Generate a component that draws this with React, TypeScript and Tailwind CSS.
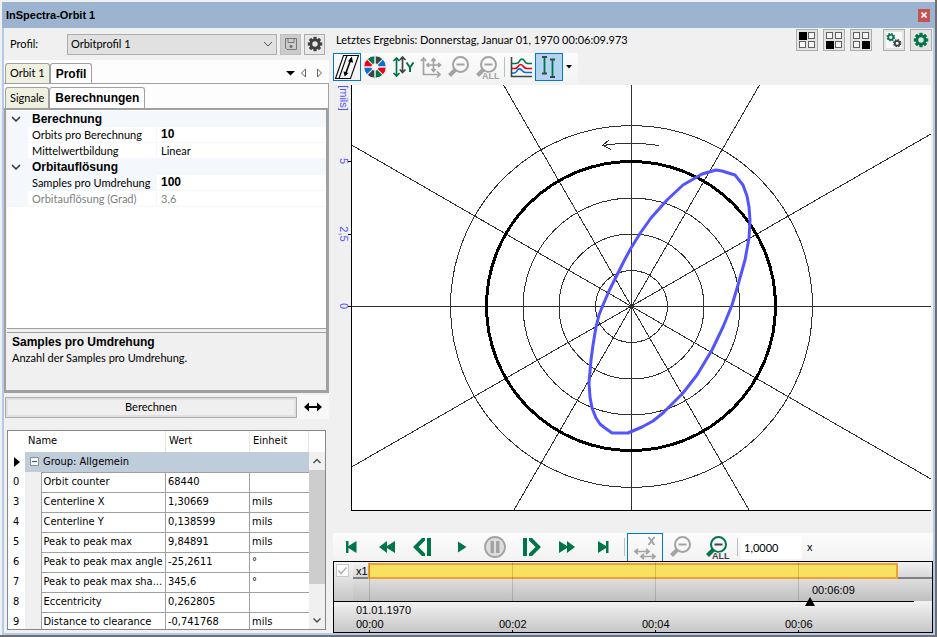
import { useState } from "react";
import type { ReactNode } from "react";
import clsx from "clsx";

const GREEN = "#00754a";
const GREY = "#a3a3a3";
const DARK = "#3c4448";

type PropertyGroup = {
  title: string;
  items: { label: string; value: string; bold?: boolean; muted?: boolean; active?: boolean }[];
};

const propertyGroups: PropertyGroup[] = [
  {
    title: "Berechnung",
    items: [
      { label: "Orbits pro Berechnung", value: "10", bold: true },
      { label: "Mittelwertbildung", value: "Linear" },
    ],
  },
  {
    title: "Orbitauflösung",
    items: [
      { label: "Samples pro Umdrehung", value: "100", bold: true, active: true },
      { label: "Orbitauflösung (Grad)", value: "3,6", muted: true },
    ],
  },
];

const resultRows = [
  { id: "0", name: "Orbit counter", value: "68440", unit: "" },
  { id: "3", name: "Centerline X", value: "1,30669", unit: "mils" },
  { id: "4", name: "Centerline Y", value: "0,138599", unit: "mils" },
  { id: "5", name: "Peak to peak max", value: "9,84891", unit: "mils" },
  { id: "6", name: "Peak to peak max angle", value: "-25,2611", unit: "°" },
  { id: "7", name: "Peak to peak max sha...", value: "345,6", unit: "°" },
  { id: "8", name: "Eccentricity", value: "0,262805", unit: "" },
  { id: "9", name: "Distance to clearance", value: "-0,741768", unit: "mils" },
];

const orbitPoints =
  "631,248 624,261 616,277 609,291 603,305 599,315 596,327 593,345 591,360 589,383 590,397 592,408 596,418 600,424 605,428 612,433 628,433 642,427 653,421 663,413 683,393 697,375 712,350 723,327 732,305 738,285 745,260 749,238 750,220 749,207 747,196 743,185 735,175 722,171 716,170 702,174 683,185 667,200 651,218 641,232";

function polar(cx: number, cy: number, r: number, deg: number) {
  const a = (deg * Math.PI) / 180;
  return `${(cx + r * Math.sin(a)).toFixed(2)} ${(cy - r * Math.cos(a)).toFixed(2)}`;
}

/* ---------- icons ---------- */

function SkewIcon() {
  return (
    <svg viewBox="0 0 28 28" className="size-7" fill="none" stroke="#000">
      <path d="M2.5 25.5 L10.5 2.5 H25.5 L17.5 25.5 Z M6 25.5 L14 2.5" strokeWidth="1.1" />
      <path d="M12.5 21 L18 6" strokeWidth="1.6" />
      <path d="M18.8 3.6 L15 8.2 L20 9.8 Z M11.7 23.4 L10.5 18.6 L15.4 20 Z" fill="#000" stroke="none" />
    </svg>
  );
}

function WheelIcon() {
  const colors = [DARK, "#0b6fd0", "#f00018", GREEN, DARK, "#0b6fd0", "#f00018", GREEN];
  return (
    <svg viewBox="0 0 28 28" className="size-7">
      {colors.map((color, i) => (
        <path
          key={i}
          fill={color}
          d={`M${polar(14, 14, 3.4, i * 45 + 4)} L${polar(14, 14, 11.2, i * 45 + 1)} A11.2 11.2 0 0 1 ${polar(14, 14, 11.2, i * 45 + 44)} L${polar(14, 14, 3.4, i * 45 + 41)} Z`}
          stroke="#fafafa"
          strokeWidth="0.8"
        />
      ))}
    </svg>
  );
}

function ScaleYIcon() {
  return (
    <svg viewBox="0 0 28 28" className="size-7" fill="none" strokeWidth="1.7">
      <path d="M7.5 5 V23 M4.5 8 L7.5 5 L10.5 8 M4.5 20 L7.5 23 L10.5 20" stroke={GREEN} />
      <path d="M13.5 4 V19 M10.8 7 L13.5 4 L16.5 7 M10.8 16.5 L13.5 19.5 L16.5 16.5" stroke={DARK} />
      <path d="M17.5 9.5 L21 14.5 L24.5 9.5 M21 14 V19" stroke={GREEN} strokeWidth="2" />
    </svg>
  );
}

function PanIcon() {
  return (
    <svg viewBox="0 0 28 28" className="size-7" fill="none" stroke={GREY} strokeWidth="1.7">
      <path d="M6.5 5 V21.5 H23 M4 8 L6.5 5 L9 8 M20 18.5 L23 21.5 L20 24.5" />
      <path d="M16.5 6 V18 M10 12 H23 M14.5 8 L16.5 5.5 L18.5 8 M14.5 16 L16.5 18.5 L18.5 16 M12 10 L10 12 L12 14 M21 10 L23.5 12 L21 14" />
    </svg>
  );
}

function ZoomOutIcon({ all = false, color = GREY }: { all?: boolean; color?: string }) {
  return (
    <svg viewBox="0 0 28 28" className="size-7" fill="none">
      <path d="M10 17 L4.5 22.5" stroke={color} strokeWidth="4" />
      <circle cx="15.5" cy="11.5" r="7.5" stroke={color} strokeWidth="2" />
      <path d="M11.5 11.5 H19.5" stroke={all && color !== GREY ? DARK : color} strokeWidth="2" />
      {all && (
        <text
          x="9"
          y="26"
          fontSize="9"
          fontWeight="700"
          fontFamily="Liberation Sans, sans-serif"
          fill={color === GREY ? GREY : DARK}
          stroke="#f4f4f4"
          strokeWidth="1"
          paintOrder="stroke"
        >
          ALL
        </text>
      )}
    </svg>
  );
}

function CurvesIcon() {
  return (
    <svg viewBox="0 0 28 28" className="size-7" fill="none" strokeWidth="1.6">
      <path d="M4.5 4 V23.5 H25" stroke={DARK} />
      <path d="M5 10.5 H9 Q11.5 10.5 12.5 8 Q15 4 17.5 8 Q18.5 10.5 21 10.5 H25" stroke={GREEN} />
      <path d="M5 15.5 H8 Q10 15.5 11.5 13 Q13.5 10 16 13 Q17.5 15.5 20 15.5 H25" stroke="#f00018" />
      <path d="M5 20 H7 Q9 20 10.5 17 Q12.5 14.5 15 17.5 Q16.5 19.5 19 19.5 H25" stroke="#0b6fd0" />
    </svg>
  );
}

function CursorsIcon() {
  return (
    <svg viewBox="0 0 28 28" className="size-7" fill="none" strokeWidth="1.8">
      <path d="M9.5 4 V20 M17.5 7 V24" stroke={GREEN} />
      <path d="M7 4 H12 M7 20.5 H12 M15 6.5 H20 M15 24 H20" stroke={DARK} />
    </svg>
  );
}

function GearIcon({ color, className }: { color: string; className: string }) {
  return (
    <svg viewBox="0 0 20 20" className={className}>
      <circle cx="10" cy="10" r="5.2" fill="none" stroke={color} strokeWidth="3.6" />
      {[0, 45, 90, 135, 180, 225, 270, 315].map((deg) => (
        <rect key={deg} x="8" y="1" width="4" height="4" fill={color} transform={`rotate(${deg} 10 10)`} />
      ))}
    </svg>
  );
}

function TwoGearsIcon() {
  return (
    <svg viewBox="0 0 20 20" className="size-4 bg-[#fafafa]" fill="none">
      <circle cx="6" cy="6.5" r="3.2" stroke={GREEN} strokeWidth="2.2" />
      <circle cx="6" cy="6.5" r="4.6" stroke={GREEN} strokeWidth="1.6" strokeDasharray="2 1.6" />
      <circle cx="14" cy="14" r="3" stroke={DARK} strokeWidth="2.2" />
      <circle cx="14" cy="14" r="4.4" stroke={DARK} strokeWidth="1.6" strokeDasharray="2 1.45" />
    </svg>
  );
}

function QuadIcon({ filled }: { filled: number }) {
  const cells = [
    [1, 1],
    [10, 1],
    [1, 10],
    [10, 10],
  ];
  return (
    <svg viewBox="0 0 18 18" className="size-[18px]" shapeRendering="crispEdges">
      {cells.map(([x, y], i) =>
        i === filled ? (
          <rect key={i} x={x} y={y} width="8" height="8" fill="#000" />
        ) : (
          <rect key={i} x={x + 0.5} y={y + 0.5} width="6" height="6" fill="#f6f6f6" stroke="#606060" />
        ),
      )}
    </svg>
  );
}

function SaveIcon() {
  return (
    <svg viewBox="0 0 16 16" className="size-4" fill="none" stroke="#777">
      <path d="M2.5 2.5 H13.5 V13.5 H4 L2.5 12 Z M5 2.5 V6.5 H11 V2.5" />
      <circle cx="8" cy="10.5" r="1.2" fill="#777" />
    </svg>
  );
}

function PlayerIcon({ children }: { children: ReactNode }) {
  return (
    <svg viewBox="0 0 24 24" className="size-6" fill={GREEN}>
      {children}
    </svg>
  );
}

/* ---------- left side ---------- */

function Tab({ label, active, onClick }: { label: string; active: boolean; onClick: () => void }) {
  return (
    <button
      type="button"
      role="tab"
      aria-selected={active}
      onClick={onClick}
      className={clsx(
        "h-full whitespace-nowrap rounded-t-[3px] border border-b-0 border-[#a0a0a0]",
        active ? "bg-white px-[5px] font-['Liberation_Sans'] text-[12px] font-bold" : "bg-[#f0f0e0] px-1",
      )}
    >
      {label}
    </button>
  );
}

function PropertyGrid() {
  return (
    <div className="min-h-0 flex-1 border-b border-[#a0a0a0] bg-white pt-px">
      <table className="w-full table-fixed border-separate border-spacing-0">
        <colgroup>
          <col className="w-[21px]" />
          <col className="w-[129px]" />
          <col />
        </colgroup>
        {propertyGroups.map((group) => (
          <tbody key={group.title}>
            <tr className="h-4 bg-[#f4f7fc]">
              <td className="p-0 pl-1">
                <svg viewBox="0 0 10 10" className="size-[10px]" fill="none" stroke="#333" strokeWidth="1.5">
                  <path d="M1 3 L5 7 L9 3" />
                </svg>
              </td>
              <th colSpan={2} className="p-0 pl-1 text-left font-['Liberation_Sans'] text-[12px] leading-4 font-bold">
                {group.title}
              </th>
            </tr>
            {group.items.map((item) => (
              <tr key={item.label} className={clsx("h-4", item.muted && "text-[#808080]")}>
                <td className="bg-[#f4f7fc] p-0" />
                <td
                  className={clsx(
                    "border-r border-b border-[#f4f7fc] p-0 pl-1 leading-[15px] whitespace-nowrap",
                    item.active && "bg-[#f4f7fc]",
                  )}
                >
                  {item.label}
                </td>
                <td
                  className={clsx(
                    "border-b border-[#f4f7fc] p-0 pl-1 leading-[15px]",
                    item.bold && "font-['Liberation_Sans'] text-[12px] font-bold",
                  )}
                >
                  {item.value}
                </td>
              </tr>
            ))}
          </tbody>
        ))}
      </table>
    </div>
  );
}

function ResultTable() {
  return (
    <div className="mr-[3px] ml-[3px] flex h-[200px] overflow-hidden border border-[#828790] bg-white font-['DejaVu_Sans_Condensed','DejaVu_Sans',sans-serif] text-[11px] [font-stretch:condensed]">
      <table className="h-max flex-1 table-fixed border-collapse">
        <colgroup>
          <col className="w-[17px]" />
          <col className="w-4" />
          <col />
          <col className="w-[84px]" />
          <col className="w-[59px]" />
        </colgroup>
        <thead>
          <tr className="h-[21px] text-left">
            <th className="p-0" />
            <th colSpan={2} className="border-r border-[#e5e5e5] p-0 pl-[3px] font-normal">Name</th>
            <th className="border-r border-[#e5e5e5] p-0 pl-[3px] font-normal">Wert</th>
            <th className="border-r border-[#e5e5e5] p-0 pl-[3px] font-normal">Einheit</th>
          </tr>
        </thead>
        <tbody>
          <tr className="h-5">
            <td className="p-0 pl-1.5">
              <svg viewBox="0 0 6 10" className="h-[10px] w-[6px]">
                <path d="M0 0 L6 5 L0 10 Z" />
              </svg>
            </td>
            <td colSpan={4} className="bg-[#bfccd9] p-0">
              <span className="flex items-center gap-1 pl-[5px]">
                <svg viewBox="0 0 9 9" className="size-[9px]" fill="#f4f4f4" stroke="#8a8f96">
                  <path d="M0.5 0.5 H8.5 V8.5 H0.5 Z" />
                  <path d="M2 4.5 H7" stroke="#2050b0" />
                </svg>
                Group: Allgemein
              </span>
            </td>
          </tr>
          {resultRows.map((row) => (
            <tr key={row.id} className="h-5">
              <td className="p-0 pl-[5px]">{row.id}</td>
              <td className="bg-[#f0f0f0] p-0" />
              <td className="overflow-hidden border border-[#a0a0a0] p-0 pl-0.5 whitespace-nowrap">{row.name}</td>
              <td className="border border-[#a0a0a0] p-0 pl-0.5">{row.value}</td>
              <td className="border-y border-[#a0a0a0] p-0 pl-0.5">{row.unit}</td>
            </tr>
          ))}
        </tbody>
      </table>
      <div className="flex w-4 flex-col">
        <div className="h-[21px] shrink-0" />
        <div className="flex min-h-0 flex-1 flex-col items-center bg-[#f0f0f0]">
          <svg viewBox="0 0 16 18" className="h-[18px] w-4 shrink-0" fill="none" stroke="#505050" strokeWidth="1.5">
            <path d="M4.5 11 L8 7.5 L11.5 11" />
          </svg>
          <div className="h-[114px] w-full bg-[#cdcdcd]" />
          <div className="flex-1" />
          <svg viewBox="0 0 16 18" className="h-[18px] w-4 shrink-0" fill="none" stroke="#505050" strokeWidth="1.5">
            <path d="M4.5 7.5 L8 11 L11.5 7.5" />
          </svg>
        </div>
      </div>
    </div>
  );
}

function SidePanel() {
  const [outerTab, setOuterTab] = useState("Profil");
  const [innerTab, setInnerTab] = useState("Berechnungen");

  return (
    <aside className="flex w-[325px] shrink-0 flex-col">
      <div className="flex h-8 items-center pl-1.5">
        <label htmlFor="profile" className="w-[57px]">Profil:</label>
        <div className="grid h-[21px] flex-1 grid-cols-1 items-center">
          <select
            id="profile"
            className="col-start-1 row-start-1 h-[21px] w-full appearance-none border border-[#adadad] bg-[#e1e1e1] px-[3px]"
          >
            <option>Orbitprofil 1</option>
          </select>
          <svg
            viewBox="0 0 10 10"
            className="pointer-events-none col-start-1 row-start-1 mr-1 size-[10px] justify-self-end"
            fill="none"
            stroke="#505050"
          >
            <path d="M1 3 L5 7 L9 3" />
          </svg>
        </div>
        <button
          type="button"
          aria-label="Speichern"
          disabled
          className="ml-[3px] flex size-[21px] items-center justify-center border border-[#bfbfbf] bg-[#cccccc]"
        >
          <SaveIcon />
        </button>
        <button
          type="button"
          aria-label="Einstellungen"
          className="mr-1 ml-[3px] flex size-[21px] items-center justify-center border border-[#adadad] bg-[#e8e8e8]"
        >
          <GearIcon color="#404040" className="size-4" />
        </button>
      </div>

      <div role="tablist" className="flex h-6 border-b border-[#a0a0a0] bg-[#fdfdfd] pt-[3px] pl-px">
        <Tab label="Orbit 1" active={outerTab === "Orbit 1"} onClick={() => setOuterTab("Orbit 1")} />
        <Tab label="Profil" active={outerTab === "Profil"} onClick={() => setOuterTab("Profil")} />
        <svg viewBox="0 0 40 12" className="mt-1 mr-1 ml-auto h-3 w-10">
          <path d="M1 4 H10 L5.5 8.5 Z" />
          <path d="M20.5 2 V10 L16.5 6 Z M32.5 2 V10 L36.5 6 Z" fill="none" stroke="#606060" />
        </svg>
      </div>
      <div role="tablist" className="flex h-6 border-r border-[#a0a0a0] bg-[#fdfdfd] pt-[3px] pl-px">
        <Tab label="Signale" active={innerTab === "Signale"} onClick={() => setInnerTab("Signale")} />
        <Tab label="Berechnungen" active={innerTab === "Berechnungen"} onClick={() => setInnerTab("Berechnungen")} />
      </div>

      <div className="flex min-h-0 flex-1 flex-col border-2 border-r-[3px] border-b-[3px] border-[#a0a0a0] pl-px">
        <PropertyGrid />
        <div className="mt-[3px] h-[58px] border-t border-[#a0a0a0] px-[5px] pt-0.5 leading-[15px]">
          <p className="font-['Liberation_Sans'] text-[12px] font-bold">Samples pro Umdrehung</p>
          <p>Anzahl der Samples pro Umdrehung.</p>
        </div>
      </div>

      <div className="flex h-[37px] pt-1 pl-px">
        <button
          type="button"
          className="h-[21px] flex-1 border border-[#adadad] bg-[#efefef] ring-2 ring-[#e1e1e1] ring-inset"
        >
          Berechnen
        </button>
        <button
          type="button"
          aria-label="Breite anpassen"
          className="-mt-0.5 flex h-6 w-8 items-center justify-center bg-[#f8f8f8]"
        >
          <svg viewBox="0 0 20 10" className="h-[10px] w-5">
            <path d="M1 5 L6 0.5 V4 H14 V0.5 L19 5 L14 9.5 V6 H6 V9.5 Z" />
          </svg>
        </button>
      </div>

      <ResultTable />
      <div className="h-[3px]" />
    </aside>
  );
}

/* ---------- right side ---------- */

function OrbitChart() {
  return (
    <svg viewBox="333 85 598 426" preserveAspectRatio="xMinYMin meet" className="min-h-0 w-full flex-1">
      <rect x="352" y="85" width="579" height="425" fill="#fff" />
      <g shapeRendering="crispEdges" fill="none" stroke="#303030">
        <circle cx="631.5" cy="306.5" r="36" />
        <circle cx="631.5" cy="306.5" r="72.5" />
        <circle cx="631.5" cy="306.5" r="108.5" />
        <circle cx="631.5" cy="306.5" r="181" />
        <path d="M351 306.5 H931 M631.5 85 V510" />
        <path d="M351.5 145 L931 479 M351.5 467 L931 134 M503.5 85 L749 510 M514 510 L759.5 85" />
        <path d="M602.5 145.5 Q630 141 659 145.5 M609 140 L602.5 145.5 L611.5 149.5" />
      </g>
      <circle cx="631.5" cy="306.5" r="2" fill="#303030" />
      <circle cx="631" cy="306" r="144.5" fill="none" stroke="#000" strokeWidth="3" shapeRendering="crispEdges" />
      <polygon points={orbitPoints} fill="none" stroke="#5454ff" strokeWidth="3" strokeLinejoin="round" />
      <path
        d="M351.5 85 V510.5 H931 M348 161.5 H351 M348 234.5 H351 M348 306.5 H351"
        fill="none"
        stroke="#000"
        shapeRendering="crispEdges"
      />
      <g fill="#5454ff" fontSize="11" textAnchor="middle" fontFamily="Liberation Sans, sans-serif">
        <text transform="translate(340 98) rotate(90)">[mils]</text>
        <text transform="translate(340 161) rotate(90)">5</text>
        <text transform="translate(340 234) rotate(90)">2,5</text>
        <text transform="translate(340 306) rotate(90)">0</text>
      </g>
    </svg>
  );
}

function ToolButton({
  label,
  selected,
  outlined,
  disabled,
  children,
}: {
  label: string;
  selected?: boolean;
  outlined?: boolean;
  disabled?: boolean;
  children: ReactNode;
}) {
  return (
    <button
      type="button"
      aria-label={label}
      disabled={disabled}
      className={clsx(
        "flex size-7 shrink-0 items-center justify-center",
        selected && "bg-[#b3d4f1]",
        (selected || outlined) && "outline outline-1 -outline-offset-1 outline-[#0078d7]",
      )}
    >
      {children}
    </button>
  );
}

function ChartToolbar() {
  return (
    <div className="flex h-8 w-[245px] items-start bg-linear-to-b from-[#fcfcfc] to-[#f2f2f2]">
      <ToolButton label="Orbit" outlined><SkewIcon /></ToolButton>
      <ToolButton label="Farben"><WheelIcon /></ToolButton>
      <ToolButton label="Y skalieren"><ScaleYIcon /></ToolButton>
      <ToolButton label="Verschieben" disabled><PanIcon /></ToolButton>
      <ToolButton label="Verkleinern" disabled><ZoomOutIcon /></ToolButton>
      <ToolButton label="Alles anzeigen" disabled><ZoomOutIcon all /></ToolButton>
      <div className="mr-0.5 ml-[3px] mt-1 h-5 w-px shrink-0 bg-[#bdbdbd]" />
      <ToolButton label="Kurven"><CurvesIcon /></ToolButton>
      <ToolButton label="Cursor" selected><CursorsIcon /></ToolButton>
      <button type="button" aria-label="Cursor auswählen" className="flex h-7 w-3 items-center justify-center">
        <svg viewBox="0 0 6 4" className="h-1 w-1.5">
          <path d="M0 0 H6 L3 3.5 Z" />
        </svg>
      </button>
    </div>
  );
}

function PlayerToolbar() {
  const buttons: { label: string; icon: ReactNode; disabled?: boolean }[] = [
    { label: "Anfang", icon: <path d="M7 6 H9.500 V11 L17.500 6 V18 L9.500 13 V18 H7 Z" /> },
    { label: "Zurückspulen", icon: <path d="M4 12 L12 6 V11 L20 6 V18 L12 13 V18 Z" /> },
    {
      label: "Schritt zurück",
      icon: <path d="M16 3 H20 V21 H16 Z M11 3 L2 12 L11 21 H14 V18.5 L7.5 12 L14 5.5 V3 Z" />,
    },
    { label: "Wiedergabe", icon: <path d="M11 6.5 V17.5 L19.5 12 Z" /> },
    {
      label: "Pause",
      disabled: true,
      icon: (
        <>
          <circle cx="12" cy="12" r="10" fill="#dedede" stroke={GREY} strokeWidth="1.8" />
          <path d="M7.5 6 H11 V18 H7.5 Z M13 6 H16.5 V18 H13 Z" fill={GREY} />
        </>
      ),
    },
    {
      label: "Schritt vor",
      icon: <path d="M4 3 H8 V21 H4 Z M13 3 L22 12 L13 21 H10 V18.5 L16.5 12 L10 5.5 V3 Z" />,
    },
    { label: "Vorspulen", icon: <path d="M20 12 L12 6 V11 L4 6 V18 L12 13 V18 Z" /> },
    { label: "Ende", icon: <path d="M17.5 6 H15 V11 L7 6 V18 L15 13 V18 H17.5 Z" /> },
  ];

  return (
    <div className="flex h-7 items-center bg-linear-to-b from-[#fcfcfc] to-[#f2f2f2]">
      {buttons.map((button) => (
        <button
          key={button.label}
          type="button"
          aria-label={button.label}
          disabled={button.disabled}
          className="flex h-full w-9 shrink-0 items-center justify-center"
        >
          <PlayerIcon>{button.icon}</PlayerIcon>
        </button>
      ))}
      <div className="mr-0.5 ml-[3px] h-[18px] w-px bg-[#bdbdbd]" />
      <button
        type="button"
        aria-label="X verschieben"
        className="flex h-7 w-9 items-center justify-center border border-b-0 border-[#0078d7]"
      >
        <svg viewBox="0 0 28 26" className="h-[26px] w-7" fill="none" stroke={GREY} strokeWidth="1.7">
          <path d="M17.5 2 L23.5 10 M23.5 2 L17.5 10" strokeWidth="2" />
          <path d="M4 16.5 H18 M7 14 L4 16.5 L7 19 M15 14 L18 16.5 L15 19" />
          <path d="M10 21.5 H24 M13 19 L10 21.5 L13 24 M21 19 L24 21.5 L21 24" />
        </svg>
      </button>
      <button type="button" aria-label="Zeit verkleinern" disabled className="flex w-9 justify-center">
        <ZoomOutIcon />
      </button>
      <button type="button" aria-label="Zeit alles" className="flex w-9 justify-center">
        <ZoomOutIcon all color={GREEN} />
      </button>
      <div className="mr-[3px] ml-0.5 h-[18px] w-px bg-[#bdbdbd]" />
      <input
        aria-label="Geschwindigkeit"
        defaultValue="1,0000"
        className="h-[23px] w-[61px] bg-white px-[3px]"
      />
      <span className="ml-[5px] font-['Liberation_Sans']">x</span>
    </div>
  );
}

function Timeline() {
  const ticks = ["00:00", "00:02", "00:04", "00:06"];
  return (
    <div className="relative border border-black font-['Liberation_Sans'] text-[11px]">
      <div className="flex h-[39px]">
        <div className="w-[19px] bg-linear-to-b from-[#f6f6f6] to-[#c6c6c6] pt-0.5 pl-0.5">
          <div className="grid size-[13px]">
            <input
              type="checkbox"
              aria-label="Spur x1"
              defaultChecked
              className="col-start-1 row-start-1 size-[13px] appearance-none border border-[#c8c8c8] bg-white"
            />
            <svg
              viewBox="0 0 13 13"
              className="pointer-events-none col-start-1 row-start-1 size-[13px]"
              fill="none"
              stroke="#b0b0b0"
              strokeWidth="1.5"
            >
              <path d="M2.5 6.5 L5 9.5 L10.5 3.5" />
            </svg>
          </div>
        </div>
        <div className="flex flex-1 flex-col">
          <div className="flex h-[17px] items-start border-b-2 border-[#808080] bg-linear-to-b from-[#f2f2f2] to-[#d8d8d8]">
            <span className="w-[15px] pl-[3px] leading-[18px]">x1</span>
            <div className="mt-px mr-[34px] h-4 flex-1 border-2 border-[#f0a030] bg-[#f8e060]" />
          </div>
          <div className="flex-1 bg-linear-to-b from-[#dedede] to-[#bfbfbf]" />
        </div>
      </div>
      <div className="h-px bg-linear-to-r from-black from-97% to-transparent to-97%" />
      <div className="h-[30px] bg-linear-to-b from-[#f2f2f2] to-[#c6c6c6] pt-px">
        <p className="pl-[22px] leading-[14px]">01.01.1970</p>
        <div className="flex pl-[22px] leading-[14px]">
          {ticks.map((tick) => (
            <span key={tick} className="w-[143px] shrink-0 last:w-auto">{tick}</span>
          ))}
        </div>
      </div>
      <div className="pointer-events-none absolute inset-x-0 top-0 flex h-[39px] overflow-hidden pl-[35px]">
        {ticks.map((tick) => (
          <i key={tick} className="w-[143px] shrink-0 border-l border-black/15" />
        ))}
      </div>
      {/* short marks where the scale meets the upper and lower frame */}
      <div className="pointer-events-none absolute inset-x-0 bottom-0 flex h-0.5 overflow-hidden pl-[35px]">
        {ticks.map((tick) => (
          <i key={tick} className="w-[143px] shrink-0 border-l border-black" />
        ))}
      </div>
      <div className="absolute top-[21px] left-[478px] leading-[14px]">00:06:09</div>
      <svg viewBox="0 0 10 9" className="absolute top-[35px] left-[471px] h-[9px] w-[10px]">
        <path d="M5 0 L10 9 H0 Z" />
      </svg>
    </div>
  );
}

function HeaderButton({ label, children }: { label: string; children: ReactNode }) {
  return (
    <button
      type="button"
      aria-label={label}
      className="flex size-[22px] items-center justify-center border border-[#adadad] bg-[#e4e4e4]"
    >
      {children}
    </button>
  );
}

function MainPanel() {
  return (
    <main className="flex min-w-0 flex-1 flex-col pl-1">
      <div className="flex h-[25px] items-start gap-[5px] pt-px pr-px">
        <p className="flex-1 pl-[3px] leading-[22px] whitespace-nowrap">
          Letztes Ergebnis: Donnerstag, Januar 01, 1970 00:06:09.973
        </p>
        <HeaderButton label="Ansicht 1"><QuadIcon filled={0} /></HeaderButton>
        <HeaderButton label="Ansicht 2"><QuadIcon filled={2} /></HeaderButton>
        <HeaderButton label="Ansicht 3"><QuadIcon filled={3} /></HeaderButton>
        <div className="w-px" />
        <HeaderButton label="Optionen"><TwoGearsIcon /></HeaderButton>
        <HeaderButton label="Einstellungen"><GearIcon color={GREEN} className="size-4" /></HeaderButton>
      </div>
      <ChartToolbar />
      <div className="mr-0.5 flex min-h-0 flex-1 flex-col">
        <OrbitChart />
      </div>
      <div className="h-[22px]" />
      <PlayerToolbar />
      <Timeline />
    </main>
  );
}

export default function App() {
  return (
    <div className="flex h-screen min-h-[600px] flex-col border-r-2 border-b-2 border-[#707070] bg-[#f0f0f0] pt-0.5 pl-0.5 font-['Lato','Liberation_Sans',sans-serif] text-[11px] text-black">
      <header className="flex h-[26px] items-center justify-between bg-[#9db4d0] pr-[5px] pl-1">
        <h1 className="font-['Liberation_Sans'] text-[11px] font-bold">InSpectra-Orbit 1</h1>
        <button
          type="button"
          aria-label="Schließen"
          className="flex h-[13px] w-3 items-center justify-center bg-[#c75050]"
        >
          <svg viewBox="0 0 6 6" className="size-1.5" stroke="#fff" strokeWidth="1.6">
            <path d="M0.5 0.5 L5.5 5.5 M5.5 0.5 L0.5 5.5" />
          </svg>
        </button>
      </header>
      <div className="flex min-h-0 flex-1 border-x-2 border-b-2 border-[#b3cbe8]">
        <SidePanel />
        <MainPanel />
      </div>
    </div>
  );
}
